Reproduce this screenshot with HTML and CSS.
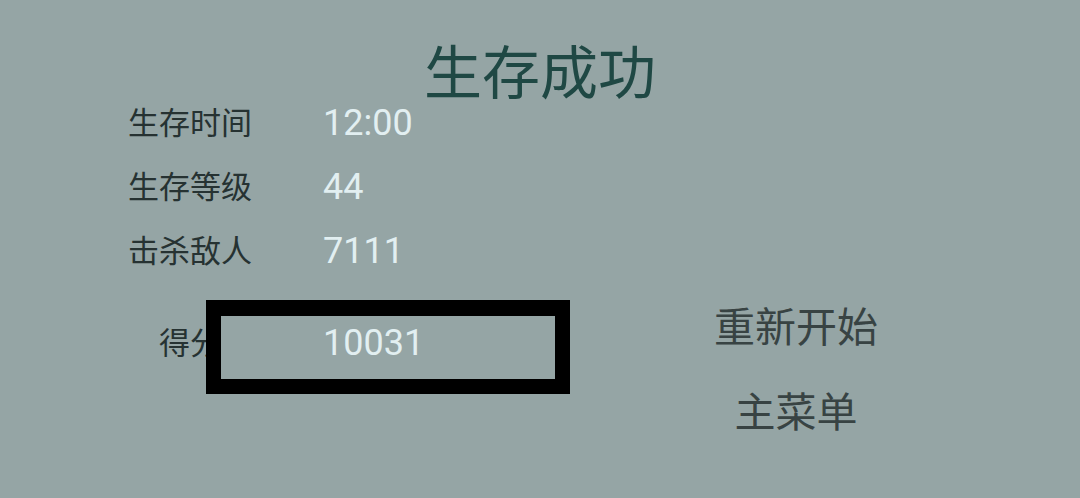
FILE: index.html
```html
<!DOCTYPE html>
<html lang="zh">
<head>
<meta charset="utf-8">
<title>生存成功</title>
<link rel="stylesheet" href="styles.css">
</head>
<body>
<main class="screen">
  <h1 class="title">生存成功</h1>
  <div class="content">
    <div class="stats">
      <div class="row"><span class="label">生存时间</span><span class="value">12:00</span></div>
      <div class="row"><span class="label">生存等级</span><span class="value">44</span></div>
      <div class="row"><span class="label">击杀敌人</span><span class="value">7111</span></div>
      <div class="row score"><span class="label">得分</span><span class="value">10031</span><span class="frame"></span></div>
    </div>
    <nav class="menu">
      <span class="menu-item">重新开始</span>
      <span class="menu-item">主菜单</span>
    </nav>
  </div>
</main>
</body>
</html>
```
FILE: styles.css
```css
html, body {
  margin: 0;
  padding: 0;
  background: #95a5a5;
}
.screen {
  width: 1080px;
  height: 498px;
  overflow: hidden;
  display: flex;
  flex-direction: column;
  font-family: "Noto Sans CJK SC", "Noto Sans", sans-serif;
}
.title {
  margin: 40px 0 0 0;
  height: 58px;
  font-size: 58px;
  line-height: 58px;
  font-weight: 400;
  text-align: center;
  color: #1f4844;
}
.content {
  display: flex;
  margin-top: 1px;
}
.stats {
  display: flex;
  flex-direction: column;
  gap: 16px;
  padding-left: 128px;
}
.row {
  display: flex;
  align-items: center;
  height: 48px;
}
.row.score {
  position: relative;
  margin-top: 28px;
}
.label {
  width: 124px;
  padding-bottom: 6px;
  text-align: center;
  font-size: 31px;
  color: #263232;
}
.value {
  margin-left: 71px;
  font-family: Roboto, "Liberation Sans", sans-serif;
  font-size: 36px;
  font-weight: 400;
  color: #e2eff1;
}
.frame {
  position: absolute;
  left: 78px;
  top: -19px;
  width: 364px;
  height: 94px;
  box-sizing: border-box;
  border: 15px solid #000;
  border-top-width: 16px;
}
.menu {
  margin-left: auto;
  margin-right: 184px;
  width: 200px;
  padding-top: 197px;
  display: flex;
  flex-direction: column;
  align-items: center;
  gap: 29px;
}
.menu-item {
  font-size: 41px;
  line-height: 56px;
  color: #384343;
}
```
